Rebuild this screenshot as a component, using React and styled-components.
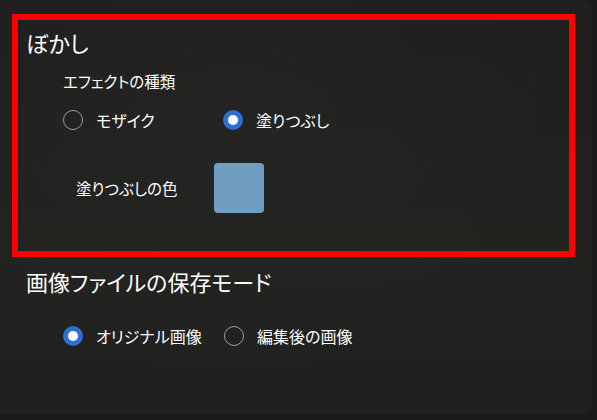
import React from "react";
import styled, { createGlobalStyle } from "styled-components";

const GlobalStyle = createGlobalStyle`
	html, body {
		margin: 0;
		padding: 0;
		background: #1a1a1a;
	}
	body {
		width: 597px;
		height: 420px;
		overflow: hidden;
		font-family: "Noto Sans CJK JP", "Noto Sans", sans-serif;
		font-feature-settings: "palt";
	}
`;

const Panel = styled.div`
	width: 600px;
	height: 414px;
	margin-left: -8px;
	border-radius: 8px;
	box-sizing: border-box;
	padding: 14px 0 0 20px;
	background: radial-gradient(
			ellipse at 40% 30%,
			rgba(255, 255, 255, 0.015),
			transparent 70%
		),
		linear-gradient(180deg, #1f1f1f 0%, #22221f 60%, #20201f 100%);
	color: #ffffff;
`;

const Highlight = styled.section`
	width: 563px;
	box-sizing: border-box;
	border: 6px solid #ff0000;
	padding: 8px 0 38px 8px;
`;

const Section = styled.section`
	padding: 10px 0 0 14px;
`;

const Title = styled.h2`
	margin: 0;
	font-size: 22px;
	font-weight: 400;
	line-height: 28px;
	color: #ffffff;
`;

const Group = styled.div`
	padding-left: ${(pr) => pr.indent || 37}px;
	margin-top: ${(pr) => pr.top || 0}px;
`;

const Label = styled.div`
	font-size: ${(pr) => pr.size || 16}px;
	line-height: 20px;
	color: #ffffff;
`;

const RadioRow = styled.div`
	display: flex;
	align-items: center;
	margin-top: ${(pr) => pr.top || 0}px;
`;

const Option = styled.label`
	display: flex;
	align-items: center;
	gap: 13px;
	width: ${(pr) => pr.width || "auto"};
	font-size: 16px;
	line-height: 20px;
	color: #ffffff;
`;

const Dot = styled.span`
	width: 20px;
	height: 20px;
	border-radius: 50%;
	box-sizing: border-box;
	display: flex;
	align-items: center;
	justify-content: center;
	flex-shrink: 0;
	border: ${(pr) => (pr.checked ? "none" : "1.5px solid #a0a0a0")};
	background: ${(pr) => (pr.checked ? "#2f6fd3" : "transparent")};

	&::after {
		content: "";
		display: ${(pr) => (pr.checked ? "block" : "none")};
		width: 10px;
		height: 10px;
		border-radius: 50%;
		background: #ffffff;
	}
`;

const ColorRow = styled.div`
	display: flex;
	align-items: center;
	margin-top: 33px;
	padding-left: 13px;
`;

const ColorLabel = styled(Label)`
	width: 138px;
`;

const Swatch = styled.div`
	width: 50px;
	height: 50px;
	border-radius: 4px;
	background: ${(pr) => pr.color};
`;

const Radio = ({ checked, children, width }) => (
	<Option width={width}>
		<Dot checked={checked} />
		{children}
	</Option>
);

export default function App() {
	return (
		<>
			<GlobalStyle />
			<Panel>
				<Highlight>
					<Title>ぼかし</Title>
					<Group top={15}>
						<Label size={15.5}>エフェクトの種類</Label>
						<RadioRow top={19}>
							<Radio width="160px">モザイク</Radio>
							<Radio checked>塗りつぶし</Radio>
						</RadioRow>
						<ColorRow>
							<ColorLabel size={15.5}>塗りつぶしの色</ColorLabel>
							<Swatch color="#6f9ec2" />
						</ColorRow>
					</Group>
				</Highlight>
				<Section>
					<Title>画像ファイルの保存モード</Title>
					<Group top={31}>
						<RadioRow>
							<Radio checked width="161px">
								オリジナル画像
							</Radio>
							<Radio>編集後の画像</Radio>
						</RadioRow>
					</Group>
				</Section>
			</Panel>
		</>
	);
}
